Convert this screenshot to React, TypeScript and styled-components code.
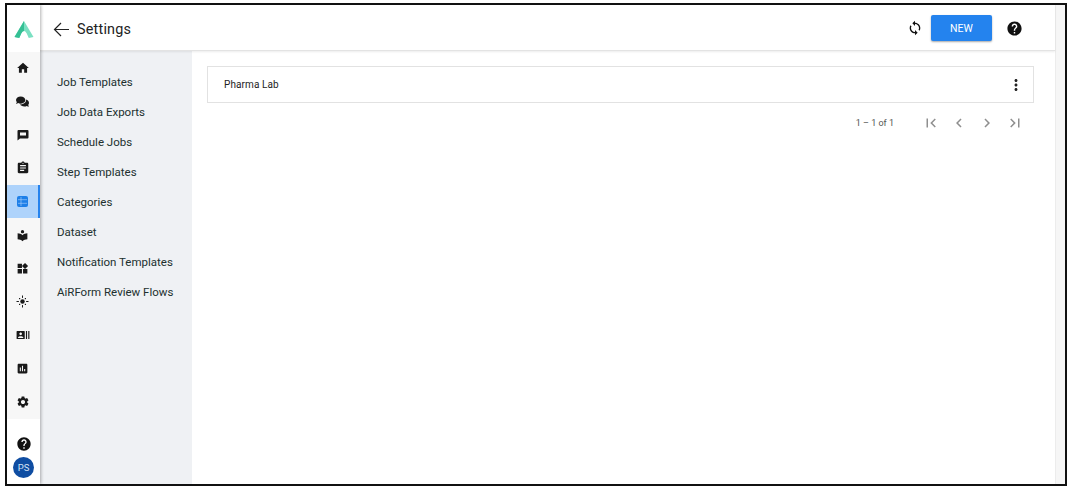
import React from "react";
import styled, {createGlobalStyle} from "styled-components";
import {
    MdHome, MdAssignment, MdLocalLibrary, MdWidgets,
    MdRecentActors, MdAssessment, MdSettings, MdHelp, MdSync, MdMoreVert,
    MdFirstPage, MdLastPage, MdChevronLeft, MdChevronRight,
} from "react-icons/md";
import {FaComments} from "react-icons/fa";

const GlobalStyle = createGlobalStyle`
  html, body {
    margin: 0;
    padding: 0;
    background: #fff;
    font-family: Roboto, "Liberation Sans", sans-serif;
  }
  * { box-sizing: border-box; }
`;

const Page = styled.div`
  width: 1070px;
  height: 490px;
  padding: 3px 3px 4px 5px;
  background: #fff;
  overflow: hidden;
`;

const Frame = styled.div`
  display: flex;
  width: 100%;
  height: 100%;
  border: 2px solid #111;
  background: #fff;
`;

const Rail = styled.nav`
  display: flex;
  flex-direction: column;
  width: 33px;
  flex: none;
  background: #fff;
  box-shadow: 1px 0 3px rgba(0, 0, 0, 0.3);
  z-index: 2;
`;

const LogoBox = styled.div`
  display: flex;
  align-items: center;
  justify-content: center;
  height: 46.5px;
  padding-top: 2px;
`;

const RailList = styled.div`
  display: flex;
  flex-direction: column;
  background: #f7f7f7;
`;

const RailItem = styled.div<{ $active?: boolean }>`
  display: flex;
  align-items: center;
  justify-content: center;
  height: 33.4px;
  color: ${p => (p.$active ? "#1d7fe8" : "#1a1a1a")};
  background: ${p => (p.$active ? "#aed3fb" : "transparent")};
  border-right: ${p => (p.$active ? "2px solid #2583ee" : "none")};
  padding-right: ${p => (p.$active ? "0" : "2px")};
`;

const RailBottom = styled.div`
  display: flex;
  flex-direction: column;
  align-items: center;
  margin-top: auto;
  padding-bottom: 6px;
  gap: 5.5px;
  color: #111;
`;

const Avatar = styled.div`
  display: flex;
  align-items: center;
  justify-content: center;
  width: 21px;
  height: 21px;
  border-radius: 50%;
  background: #0f4da2;
  color: #d4e2f5;
  font-size: 9.5px;
`;

const Main = styled.div`
  display: flex;
  flex-direction: column;
  flex: 1;
  min-width: 0;
`;

const Header = styled.header`
  display: flex;
  align-items: center;
  height: 46px;
  flex: none;
  padding: 3px 32px 0 13px;
  border-bottom: 1px solid #e3e3e3;
  box-shadow: 0 1px 2px rgba(0, 0, 0, 0.08);
  background: #fff;
  z-index: 1;
`;

const Title = styled.h1`
  margin: 0 0 0 7px;
  font-size: 14.4px;
  font-weight: 400;
  color: #222;
  letter-spacing: 0.2px;
`;

const HeaderActions = styled.div`
  display: flex;
  align-items: center;
  margin-left: auto;
  margin-top: -2px;
  color: #111;
`;

const NewButton = styled.button`
  width: 61px;
  height: 26px;
  margin: 0 14px 0 8px;
  padding: 0;
  border: none;
  border-radius: 2px;
  background: #2483ee;
  color: #fff;
  font-family: inherit;
  font-size: 10.5px;
  font-weight: 400;
  box-shadow: 0 1px 2px rgba(0, 0, 0, 0.35);
`;

const Body = styled.div`
  display: flex;
  flex: 1;
  min-height: 0;
`;

const SideMenu = styled.aside`
  display: flex;
  flex-direction: column;
  width: 152px;
  flex: none;
  padding-top: 16px;
  background: #eff1f4;
`;

const SideItem = styled.div`
  display: flex;
  align-items: center;
  height: 30px;
  padding-left: 17px;
  font-size: 11.5px;
  color: #21302f;
`;

const Content = styled.main`
  flex: 1;
  min-width: 0;
  padding: 15px 21px 0 15px;
`;

const Card = styled.div`
  display: flex;
  align-items: center;
  justify-content: space-between;
  height: 37px;
  padding: 0 8px 0 16px;
  border: 1px solid #e2e2e2;
  font-size: 10px;
  color: #222;
  letter-spacing: 0.1px;
`;

const Pager = styled.div`
  display: flex;
  align-items: center;
  justify-content: flex-end;
  height: 18px;
  margin-top: 11px;
  padding-right: 10px;
  gap: 10px;
  color: #8f8f8f;
`;

const PagerLabel = styled.span`
  margin-right: 18px;
  font-size: 9px;
  color: #555;
`;

const ScrollTrack = styled.div`
  width: 10px;
  flex: none;
  background: #f6f6f6;
  border-left: 1px solid #ececec;
`;

const Logo = () => (
    <svg width="22" height="19" viewBox="0 0 20 18">
        <path d="M10 1 L1 16 L5.5 17 L7.5 12.5 Q10 8.5 12.5 12.5 L14.5 17 L19 16 Z" fill="#7be0c2" />
        <path d="M10 1 L1 16 L5.5 17 L7.5 12.5 Q8.7 10.6 10 10.5 Z" fill="#35bf94" />
    </svg>
);

const BackArrow = () => (
    <svg width="17" height="15" viewBox="0 0 17 15" fill="none" stroke="#222" strokeWidth="1.2">
        <path d="M16 7.5 H1.5 M8 1 L1.5 7.5 L8 14" />
    </svg>
);

const Sparkle = () => (
    <svg width="13" height="13" viewBox="0 0 13 13" fill="#1a1a1a">
        <circle cx="6.5" cy="6.5" r="2.2" />
        <rect x="6" y="0.5" width="1" height="2.4" />
        <rect x="6" y="10.1" width="1" height="2.4" />
        <rect x="0.5" y="6" width="2.4" height="1" />
        <rect x="10.1" y="6" width="2.4" height="1" />
        <rect x="3" y="3" width="1.2" height="1.2" />
        <rect x="8.8" y="3" width="1.2" height="1.2" />
        <rect x="3" y="8.8" width="1.2" height="1.2" />
        <rect x="8.8" y="8.8" width="1.2" height="1.2" />
    </svg>
);

const ChatBubble = () => (
    <svg width="12" height="12" viewBox="0 0 12 12">
        <path d="M1.5 1 H10.5 Q11.5 1 11.5 2 V8.5 Q11.5 9.5 10.5 9.5 H3 L0.5 11.5 V2 Q0.5 1 1.5 1 Z" fill="#1a1a1a" />
        <rect x="3" y="3.5" width="6" height="3" fill="#f7f7f7" />
    </svg>
);

const ActiveTable = () => (
    <svg width="11" height="11" viewBox="0 0 11 11">
        <rect width="11" height="11" rx="2" fill="#1d7fe8" />
        <path d="M1 3.7 H10 M1 7.3 H10 M4 1 V10" stroke="#aed3fb" strokeWidth="0.6" />
    </svg>
);

const railIcons = [
    {key: "home", icon: <MdHome size={14} />},
    {key: "forum", icon: <FaComments size={13} />},
    {key: "chat", icon: <ChatBubble />},
    {key: "assignment", icon: <MdAssignment size={14} />},
    {key: "list", icon: <ActiveTable />, active: true},
    {key: "library", icon: <MdLocalLibrary size={13} />},
    {key: "widgets", icon: <MdWidgets size={13} />},
    {key: "sparkle", icon: <Sparkle />},
    {key: "actors", icon: <MdRecentActors size={14} />},
    {key: "assessment", icon: <MdAssessment size={13} />},
    {key: "settings", icon: <MdSettings size={14} />},
];

const menuItems = [
    "Job Templates",
    "Job Data Exports",
    "Schedule Jobs",
    "Step Templates",
    "Categories",
    "Dataset",
    "Notification Templates",
    "AiRForm Review Flows",
];

export default function App() {
    return (
        <Page>
            <GlobalStyle />
            <Frame>
                <Rail>
                    <LogoBox><Logo /></LogoBox>
                    <RailList>
                        {railIcons.map(item => (
                            <RailItem key={item.key} $active={item.active}>{item.icon}</RailItem>
                        ))}
                    </RailList>
                    <RailBottom>
                        <MdHelp size={16} />
                        <Avatar>PS</Avatar>
                    </RailBottom>
                </Rail>
                <Main>
                    <Header>
                        <BackArrow />
                        <Title>Settings</Title>
                        <HeaderActions>
                            <MdSync size={16} />
                            <NewButton>NEW</NewButton>
                            <MdHelp size={17} />
                        </HeaderActions>
                    </Header>
                    <Body>
                        <SideMenu>
                            {menuItems.map(label => <SideItem key={label}>{label}</SideItem>)}
                        </SideMenu>
                        <Content>
                            <Card>
                                Pharma Lab
                                <MdMoreVert size={18} color="#222" />
                            </Card>
                            <Pager>
                                <PagerLabel>1 – 1 of 1</PagerLabel>
                                <MdFirstPage size={18} />
                                <MdChevronLeft size={18} />
                                <MdChevronRight size={18} />
                                <MdLastPage size={18} />
                            </Pager>
                        </Content>
                    </Body>
                </Main>
                <ScrollTrack />
            </Frame>
        </Page>
    );
}
